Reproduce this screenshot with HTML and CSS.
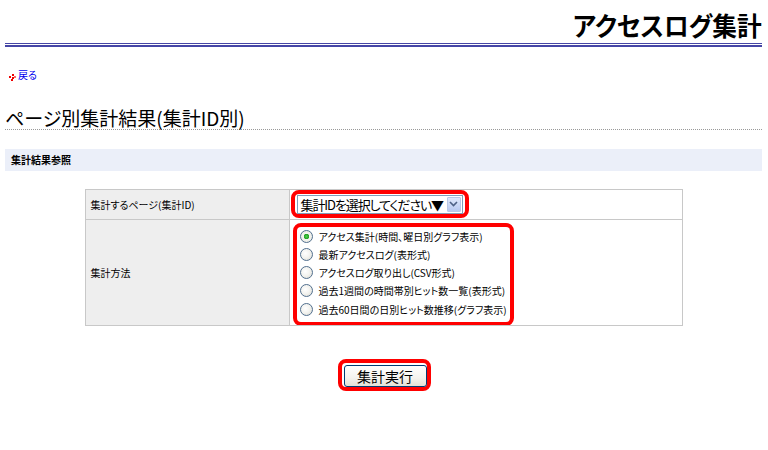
FILE: index.html
```html
<!DOCTYPE html>
<html lang="ja">
<head>
<meta charset="utf-8">
<title>アクセスログ集計</title>
<link rel="stylesheet" href="styles.css">
</head>
<body>
<div class="page">
  <header class="header">
    <h1 class="header-title">アクセスログ集計</h1>
  </header>
  <div class="rule2"></div>

  <div class="back">
    <svg class="back-icon" width="7" height="7" viewBox="0 0 7 7">
      <rect x="3" y="0" width="2" height="2" fill="#e00"/>
      <rect x="0" y="2" width="2" height="2" fill="#e00"/>
      <rect x="3" y="3" width="2" height="2" fill="#e00"/>
      <rect x="2" y="5" width="2" height="2" fill="#e00"/>
      <rect x="5" y="2" width="2" height="2" fill="#f66"/>
    </svg><a href="#" class="back-link">戻る</a>
  </div>

  <h2 class="page-title">ページ別集計結果(集計ID別)</h2>

  <div class="section">集計結果参照</div>

  <table class="form-table">
    <tr>
      <td class="label">集計するページ(集計ID)</td>
      <td class="value">
        <div class="ring ring-select">
          <div class="fake-select">
            <span class="fake-select-text">集計IDを選択してください▼</span>
            <span class="fake-select-btn">
              <svg width="9" height="6" viewBox="0 0 9 6"><path d="M1 1 L4.5 4.5 L8 1" fill="none" stroke="#4d6185" stroke-width="1.6"/></svg>
            </span>
          </div>
        </div>
      </td>
    </tr>
    <tr>
      <td class="label">集計方法</td>
      <td class="value">
        <div class="ring ring-radios">
          <label class="opt"><input type="radio" name="m" checked><span>アクセス集計(時間、曜日別グラフ表示)</span></label>
          <label class="opt"><input type="radio" name="m"><span>最新アクセスログ(表形式)</span></label>
          <label class="opt"><input type="radio" name="m"><span>アクセスログ取り出し(CSV形式)</span></label>
          <label class="opt"><input type="radio" name="m"><span>過去1週間の時間帯別ヒット数一覧(表形式)</span></label>
          <label class="opt"><input type="radio" name="m"><span>過去60日間の日別ヒット数推移(グラフ表示)</span></label>
        </div>
      </td>
    </tr>
  </table>

  <div class="actions">
    <div class="ring ring-btn">
      <button type="button" class="submit">集計実行</button>
    </div>
  </div>
</div>
</body>
</html>
```

FILE: styles.css
```css
html, body {
  margin: 0;
  padding: 0;
  background: #fff;
}

body {
  font-family: "Noto Sans CJK JP", "Noto Sans", sans-serif;
  font-feature-settings: "palt";
  color: #000;
}

.page {
  padding: 0 6px 0 5px;
}

.header {
  height: 43px;
  display: flex;
  justify-content: flex-end;
  align-items: flex-end;
  border-bottom: 1px solid #4646a6;
}

.header-title {
  margin: 0 0 3px 0;
  font-size: 26px;
  line-height: 30px;
  font-weight: bold;
  display: inline-block;
  transform: scaleX(0.95);
  transform-origin: right center;
  letter-spacing: 0;
}

.rule2 {
  height: 2px;
  margin-top: 1px;
  background: #4646a6;
}

.back {
  margin-top: 22px;
  height: 12px;
  display: flex;
  align-items: center;
  font-size: 10px;
  line-height: 12px;
  padding-left: 4px;
}

.back-icon {
  margin-right: 2px;
  margin-top: 4px;
}

.back-link {
  color: #0000ee;
  text-decoration: none;
}

.page-title {
  margin: 26px 0 0 0;
  font-size: 19px;
  line-height: 22px;
  font-weight: normal;
  border-bottom: 1px dotted #999;
}

.section {
  margin-top: 19px;
  height: 22px;
  line-height: 22px;
  background: #ebeff9;
  font-size: 10px;
  font-weight: bold;
  padding-left: 6px;
}

.form-table {
  margin: 18px auto 0 auto;
  width: 598px;
  border-collapse: collapse;
  border: 1px solid #c8c8c8;
}

.form-table td {
  border: 1px solid #c8c8c8;
  padding: 0;
  vertical-align: middle;
}

.label {
  width: 198px;
  background: #eeeeee;
  font-size: 10px;
  padding-left: 5px !important;
}

.value {
  background: #fff;
}

.ring {
  border: 4px solid #f00;
  border-radius: 8px;
  box-sizing: border-box;
}

.ring-select {
  width: 178px;
  height: 28px;
  margin: 0 0 1px 1px;
  padding: 0 2px 0 2px;
  display: flex;
  align-items: center;
}

.fake-select {
  width: 168px;
  height: 19px;
  box-sizing: border-box;
  border: 1px solid #7f9db9;
  background: #fff;
  display: flex;
  align-items: center;
  justify-content: space-between;
  padding: 0 1px 0 3px;
}

.fake-select-text {
  font-size: 13px;
  line-height: 17px;
  white-space: nowrap;
  letter-spacing: -1.1px;
}

.fake-select-btn {
  width: 14px;
  height: 15px;
  box-sizing: border-box;
  border: 1px solid #b8c8e8;
  border-radius: 1px;
  background: linear-gradient(#dfe8fb, #b7c9f0);
  display: flex;
  align-items: center;
  justify-content: center;
}

.ring-radios {
  width: 221px;
  height: 103px;
  margin: 3px 0 -1px 3px;
  padding: 0 0 0 3px;
  display: flex;
  flex-direction: column;
  justify-content: flex-start;
}

.opt {
  height: 18.25px;
  display: flex;
  align-items: center;
  font-size: 10px;
  white-space: nowrap;
}

.opt input {
  appearance: none;
  -webkit-appearance: none;
  width: 13px;
  height: 13px;
  margin: 0 6px 0 0;
  border-radius: 50%;
  border: 1px solid #52708f;
  background: radial-gradient(circle at 40% 40%, #ffffff 0%, #f2f2ee 50%, #d6d6ce 100%);
  box-sizing: border-box;
  flex: none;
}

.opt input:checked {
  background: radial-gradient(circle, #4fd04f 0, #21a121 2.5px, #f4f4f0 3px, #e6e6de 100%);
}

.actions {
  margin-top: 33px;
  display: flex;
  justify-content: center;
}

.ring-btn {
  width: 93px;
  height: 32px;
  padding: 2px 0 0 2px;
  margin-left: 1px;
}

.submit {
  width: 83px;
  height: 22px;
  margin: 0;
  padding: 0;
  border: 1px solid #003c74;
  border-radius: 3px;
  background: linear-gradient(#ffffff 0%, #f4f3ee 60%, #e3e1d6 100%);
  font-family: "Noto Sans CJK JP", "Noto Sans", sans-serif;
  font-size: 14px;
  line-height: 20px;
  color: #000;
  display: block;
}
```
